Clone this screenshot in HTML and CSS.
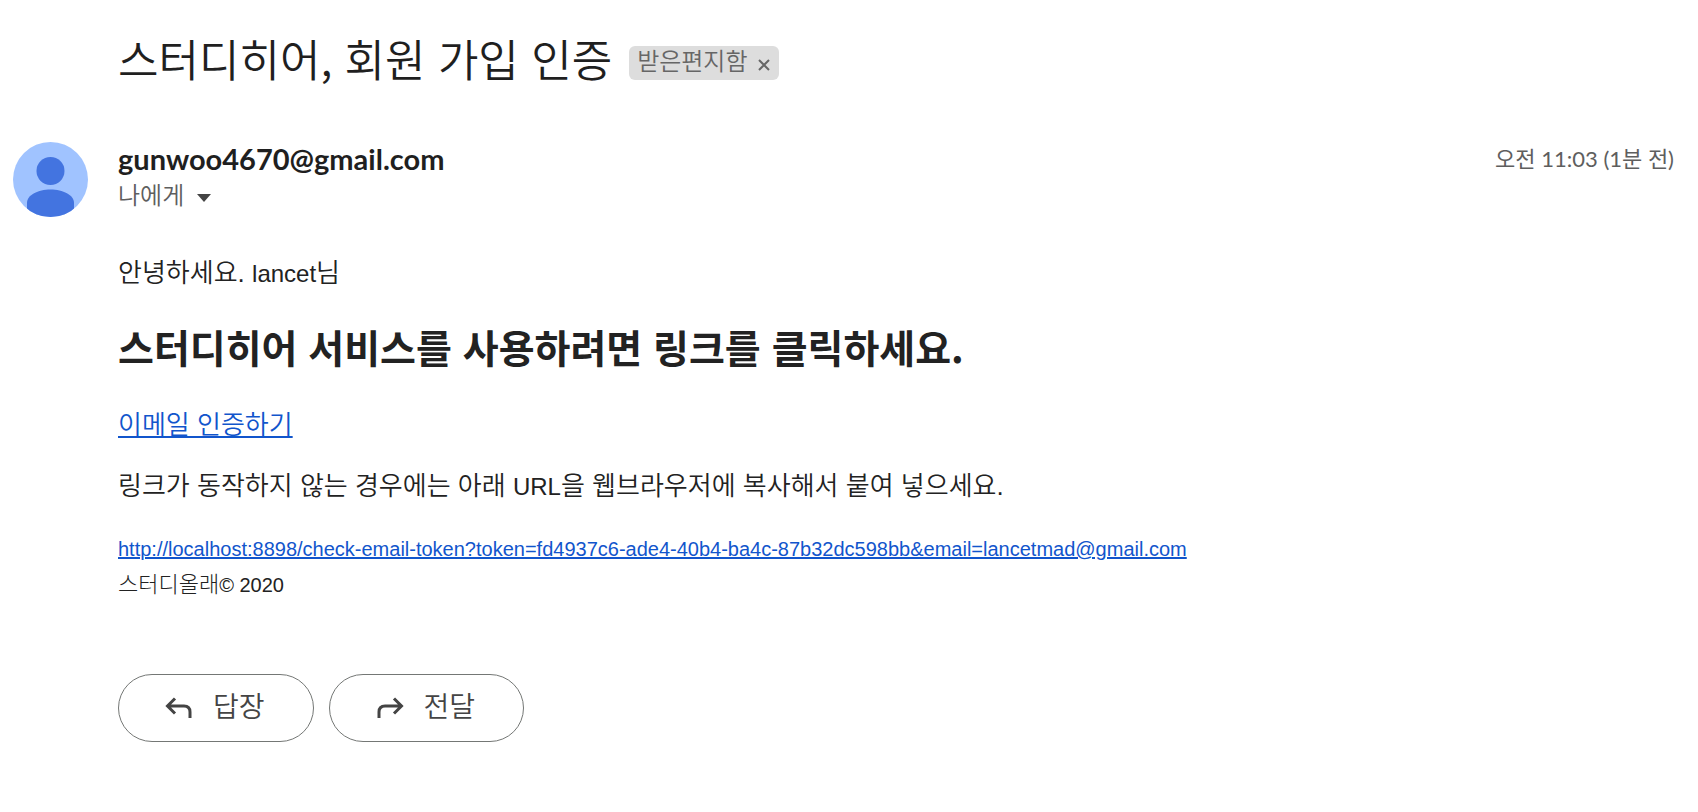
FILE: index.html
```html
<!DOCTYPE html>
<html lang="ko">
<head>
  <meta charset="UTF-8" />
  <meta name="viewport" content="width=device-width, initial-scale=1" />
  <title>스터디히어, 회원 가입 인증</title>
  <link rel="stylesheet" href="styles.css">
</head>
<body>
  <main class="mail">
    <!-- Subject -->
    <header class="subject">
      <h1>스터디히어, 회원 가입 인증</h1>
      <div class="label">
        <span>받은편지함</span>
        <button class="label-remove" aria-label="받은편지함 라벨 삭제">
          <svg width="12" height="12" viewBox="0 0 12 12"><path d="M1 1l10 10M11 1L1 11" /></svg>
        </button>
      </div>
    </header>

    <!-- Sender -->
    <section class="sender">
      <svg class="avatar" viewBox="0 0 75 75">
        <defs><clipPath id="round"><circle cx="37.5" cy="37.5" r="37.5" /></clipPath></defs>
        <g clip-path="url(#round)">
          <rect width="75" height="75" fill="#a0c3ff" />
          <circle cx="37.5" cy="29" r="14" fill="#4374e0" />
          <path d="M14 75V61c0-8 11-13.500 23.500-13.500S61 53 61 61v14z" fill="#4374e0" />
        </g>
      </svg>
      <div class="sender-info">
        <div class="sender-email">gunwoo4670@gmail.com</div>
        <button class="recipient">
          나에게
          <svg width="16" height="12" viewBox="0 0 16 12"><path d="M1 4h14L8 12z" /></svg>
        </button>
      </div>
      <time class="date">오전 11:03 (1분 전)</time>
    </section>

    <!-- Message -->
    <article class="message">
      <p>안녕하세요. <span class="latin">lancet</span>님</p>
      <h2>스터디히어 서비스를 사용하려면 링크를 클릭하세요.</h2>
      <p><a href="http://localhost:8898/check-email-token?token=fd4937c6-ade4-40b4-ba4c-87b32dc598bb&amp;email=lancetmad@gmail.com">이메일 인증하기</a></p>
      <p>링크가 동작하지 않는 경우에는 아래 <span class="latin">URL</span>을 웹브라우저에 복사해서 붙여 넣으세요.</p>
      <footer>
        <a class="latin" href="http://localhost:8898/check-email-token?token=fd4937c6-ade4-40b4-ba4c-87b32dc598bb&amp;email=lancetmad@gmail.com">http://localhost:8898/check-email-token?token=fd4937c6-ade4-40b4-ba4c-87b32dc598bb&amp;email=lancetmad@gmail.com</a>
        <small>스터디올래<span class="latin">© 2020</span></small>
      </footer>
    </article>

    <!-- Actions -->
    <div class="actions">
      <button class="action">
        <svg width="28" height="22" viewBox="0 0 28 22"><path d="M10 1.500L2.500 9l7.500 7.500M2.500 9H19q6 0 6 6v6" /></svg>
        <span>답장</span>
      </button>
      <button class="action">
        <svg width="28" height="22" viewBox="0 0 28 22"><path d="M18 1.500L25.500 9 18 16.500M25.500 9H9q-6 0-6 6v6" /></svg>
        <span>전달</span>
      </button>
    </div>
  </main>
</body>
</html>
```
FILE: styles.css
```css
* {
  box-sizing: border-box;
}

body {
  margin: 0;
  background: #fff;
  color: #222;
  font-family: "Liberation Sans", "Noto Sans CJK KR", sans-serif;
}

h1, h2, p {
  margin: 0;
}

button {
  border: none;
  padding: 0;
  background: none;
  color: inherit;
  font: inherit;
  cursor: pointer;
}

.mail {
  padding: 33px 24px 32px 118px;
}

/* Subject */
.subject {
  display: flex;
  align-items: center;
  gap: 17px;
}

.subject h1 {
  padding-bottom: 10px;
  font-family: "Noto Sans CJK KR", sans-serif;
  font-size: 44px;
  line-height: 50px;
  font-weight: 350;
  color: #1f1f1f;
}

.label {
  display: flex;
  align-items: center;
  gap: 10px;
  height: 34px;
  padding: 0 9px 0 8px;
  border-radius: 6px;
  background: #ddd;
  color: #666;
  font-size: 24px;
  line-height: 32px;
  font-weight: 350;
}

.label span {
  padding-bottom: 2px;
}

.label-remove {
  display: flex;
  padding-top: 3px;
}

.label-remove svg {
  fill: none;
  stroke: #666;
  stroke-width: 2;
}

/* Sender */
.sender {
  display: flex;
  align-items: flex-start;
  gap: 30px;
  margin: 49px 0 0 -105px;
}

.avatar {
  width: 75px;
  height: 75px;
}

.sender-info {
  flex: 1;
}

.sender-email {
  font-family: Lato, sans-serif;
  font-size: 29px;
  line-height: 34px;
  font-weight: 700;
  color: #1f1f1f;
}

.recipient {
  display: flex;
  align-items: center;
  gap: 12px;
  color: #5e5e5e;
  font-size: 24px;
  line-height: 40px;
  font-weight: 350;
}

.recipient svg {
  fill: #444;
}

.date {
  color: #5e5e5e;
  font-family: Lato, "Noto Sans CJK KR", sans-serif;
  font-size: 22px;
  line-height: 34px;
}

/* Message */
.message {
  margin-top: 36px;
  font-size: 26px;
  line-height: 40px;
  font-weight: 350;
}

.message .latin {
  font-size: 24px;
  font-weight: 400;
}

.message h2 {
  margin: 24px 0 31px;
  font-family: "Noto Sans CJK KR", sans-serif;
  font-size: 39px;
  line-height: 56px;
  font-weight: 700;
}

.message p + p {
  margin-top: 21px;
}

.message a {
  color: #15c;
}

.message footer {
  display: flex;
  flex-direction: column;
  align-items: flex-start;
  margin-top: 24px;
  line-height: 36px;
}

.message small {
  font-size: 22px;
  font-weight: 300;
}

.message footer .latin {
  font-size: 20px;
}

/* Actions */
.actions {
  display: flex;
  gap: 15px;
  margin-top: 71px;
}

.action {
  display: flex;
  align-items: center;
  gap: 20px;
  height: 68px;
  padding: 0 48px 0 46px;
  border: 1px solid #747775;
  border-radius: 34px;
  color: #444;
  font-size: 28px;
  font-weight: 350;
}

.action span {
  padding-bottom: 6px;
}

.action svg {
  fill: none;
  stroke: #444;
  stroke-width: 3;
}
```
